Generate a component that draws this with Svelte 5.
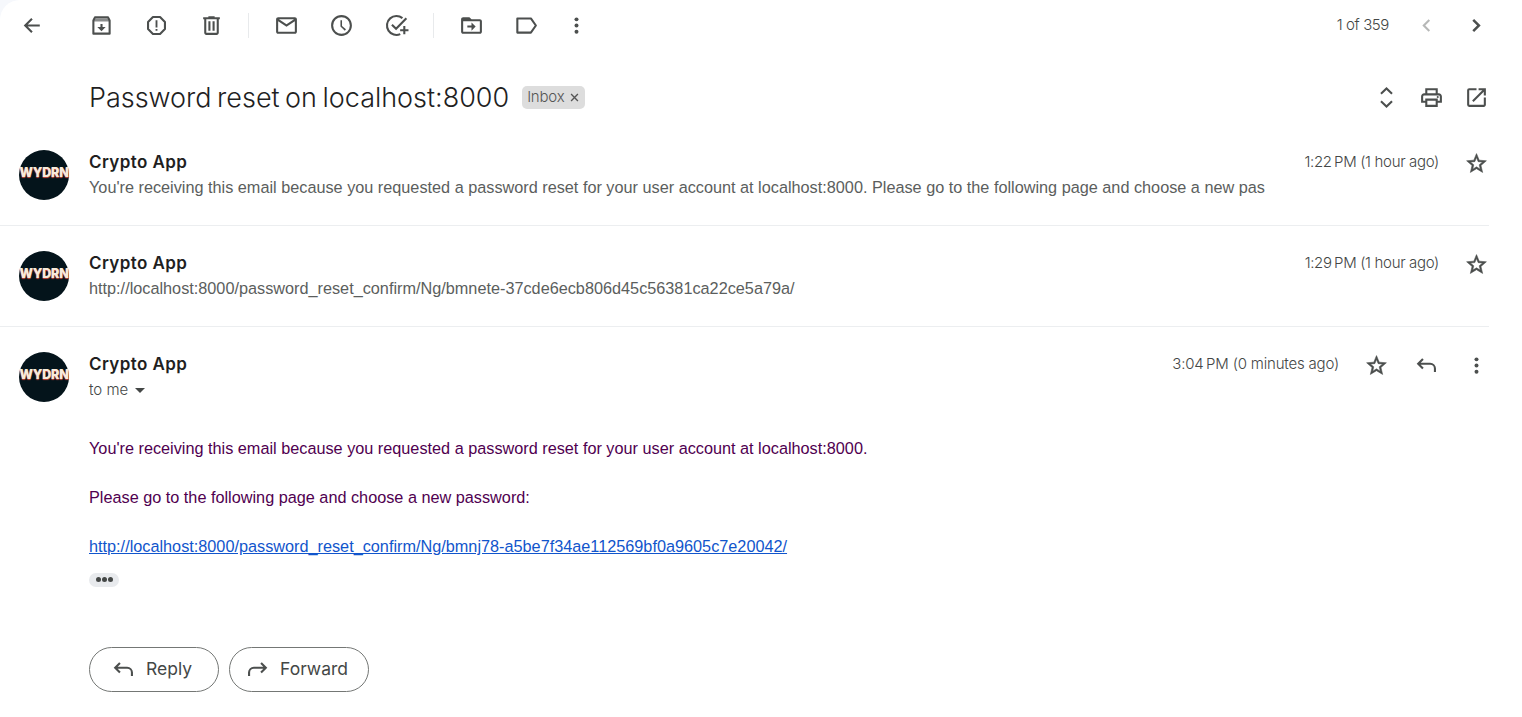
<script>
  const messages = [
    {
      time: '1:22\u202fPM (1 hour ago)',
      text: "You're receiving this email because you requested a password reset for your user account at localhost:8000. Please go to the following page and choose a new pas"
    },
    {
      time: '1:29\u202fPM (1 hour ago)',
      text: 'http://localhost:8000/password_reset_confirm/Ng/bmnete-37cde6ecb806d45c56381ca22ce5a79a/'
    }
  ];
</script>

{#snippet glyph(name)}
  <svg class="icon" viewBox="0 0 24 24" aria-hidden="true">
    {#if name === 'back'}
      <path class="line" stroke-width="1.8" d="M19 12H5.5M11.5 5.5 5 12l6.5 6.5" />
    {:else if name === 'archive'}
      <path class="line" d="M4.2 7.2 5.7 4.2h12.6l1.5 3v12.6H4.2z" stroke-linejoin="round" />
      <path d="M4 5.5h16v2.7H4z" opacity=".65" />
      <path d="M11 10.5h2v3h3l-4 4-4-4h3z" />
    {:else if name === 'spam'}
      <path class="line" stroke-width="1.8" stroke-linejoin="round" d="M8.6 3.9h6.8l4.7 4.7v6.8l-4.7 4.7H8.6l-4.7-4.7V8.6z" />
      <path d="M11.1 7h1.8v6.8h-1.8zM11.1 15.3h1.8v1.8h-1.8z" />
    {:else if name === 'delete'}
      <path d="M15 4V3H9v1H4v2h1v13c0 1.1.9 2 2 2h10c1.1 0 2-.9 2-2V6h1V4zm2 15H7V6h10zM9 8h2v9H9zm4 0h2v9h-2z" />
    {:else if name === 'mail'}
      <path d="M20 4H4c-1.1 0-2 .9-2 2v12c0 1.1.9 2 2 2h16c1.1 0 2-.9 2-2V6c0-1.1-.9-2-2-2zm-.8 2L12 10.8 4.8 6zM4 18V7.9l8 5.3 8-5.3V18z" />
    {:else if name === 'clock'}
      <path d="M11.99 2C6.47 2 2 6.48 2 12s4.47 10 9.99 10C17.52 22 22 17.52 22 12S17.52 2 11.99 2zM12 20a8 8 0 1 1 0-16 8 8 0 0 1 0 16zm.5-13H11v6l4.2 4 1.1-1.3-3.8-3.3z" />
    {:else if name === 'task'}
      <path class="line" stroke-width="1.8" d="M17.7 4.9A9.1 9.1 0 1 0 15.6 20.3M7.6 11.2l4 4L21.5 5" />
      <path class="line" stroke-width="1.9" d="M19.5 12.5v8M15.5 16.5h8" />
    {:else if name === 'move'}
      <path d="M20 6h-8l-2-2H4c-1.1 0-2 .9-2 2v12c0 1.1.9 2 2 2h16c1.1 0 2-.9 2-2V8c0-1.1-.9-2-2-2zm0 12H4V8h16zM12 17l4-4-4-4v3H8v2h4z" />
      <path d="M3 5h7l2 2.5H3z" />
    {:else if name === 'label'}
      <path class="line" stroke-linejoin="round" d="M3.2 5.2h13l4.8 6.8-4.8 6.8h-13z" />
    {:else if name === 'more'}
      <circle cx="12" cy="6.1" r="1.9" /><circle cx="12" cy="12" r="1.9" /><circle cx="12" cy="17.9" r="1.9" />
    {:else if name === 'prev'}
      <path d="M15.4 7.4 14 6l-6 6 6 6 1.4-1.4-4.6-4.6z" />
    {:else if name === 'next'}
      <path d="M9.7 5.7 8 7.4l4.6 4.6L8 16.6l1.7 1.7L16 12z" />
    {:else if name === 'expand'}
      <path class="line" d="m6.7 8.3 5.3-5 5.3 5M6.7 15.7l5.3 5 5.3-5" />
    {:else if name === 'print'}
      <path d="M19 8h-1V3H6v5H5c-1.66 0-3 1.34-3 3v6h4v4h12v-4h4v-6c0-1.66-1.34-3-3-3zM8 5h8v3H8zm8 12v2H8v-4h8zm2-2v-2H6v2H4v-4c0-.55.45-1 1-1h14c.55 0 1 .45 1 1v4z" />
      <circle cx="18" cy="11.5" r="1" />
    {:else if name === 'open'}
      <path d="M19 19H5V5h7V3H5a2 2 0 0 0-2 2v14a2 2 0 0 0 2 2h14c1.1 0 2-.9 2-2v-7h-2zM14 3v2h3.6l-9.8 9.8 1.4 1.4L19 6.4V10h2V3z" />
    {:else if name === 'star'}
      <path stroke="#444746" stroke-width=".5" d="m21.5 9.4-6.9-.6L12 2.5 9.4 8.8l-6.9.6 5.2 4.5L6.1 20.6 12 17l5.9 3.6-1.6-6.7zM12 15.2l-3.6 2.2 1-4.1-3.2-2.7 4.2-.4L12 6.3l1.6 3.9 4.2.4-3.2 2.7 1 4.1z" />
    {:else if name === 'reply'}
      <path class="line" stroke-width="1.8" d="M8.6 5.7 4 10.3l4.6 4.6M4.2 10.3h11.3a4.6 4.6 0 0 1 4.6 4.6v3.4" />
    {:else if name === 'forward'}
      <path class="line" stroke-width="1.8" d="m15.4 5.7 4.6 4.6-4.6 4.6M19.8 10.3H8.5a4.6 4.6 0 0 0-4.6 4.6v3.4" />
    {/if}
  </svg>
{/snippet}

{#snippet avatar()}
  <div class="avatar"><span>WYDRN</span></div>
{/snippet}

<main class="mail">
  <div class="toolbar">
    <button class="tool back" aria-label="Back">{@render glyph('back')}</button>
    <div class="group">
      {#each ['archive', 'spam', 'delete'] as name}
        <button class="tool" aria-label={name}>{@render glyph(name)}</button>
      {/each}
    </div>
    <div class="group">
      {#each ['mail', 'clock', 'task'] as name}
        <button class="tool" aria-label={name}>{@render glyph(name)}</button>
      {/each}
    </div>
    <div class="group">
      {#each ['move', 'label', 'more'] as name}
        <button class="tool {name}" aria-label={name}>{@render glyph(name)}</button>
      {/each}
    </div>
    <div class="pager">
      <span class="count">1 of 359</span>
      <button class="tool dim" aria-label="Newer">{@render glyph('prev')}</button>
      <button class="tool" aria-label="Older">{@render glyph('next')}</button>
    </div>
  </div>

  <header class="subject">
    <h1>Password reset on localhost:8000</h1>
    <div class="chip"><span>Inbox</span>
      <svg viewBox="0 0 10 10"><path d="m1.2 1.2 7.6 7.6m0-7.6L1.2 8.8" /></svg>
    </div>
    <div class="actions">
      {#each ['expand', 'print', 'open'] as name}
        <button class="tool" aria-label={name}>{@render glyph(name)}</button>
      {/each}
    </div>
  </header>

  {#each messages as message}
    <article class="message collapsed">
      {@render avatar()}
      <div class="content">
        <div class="head">
          <strong>Crypto App</strong>
          <span class="time">{message.time}</span>
          <button class="tool star" aria-label="Star">{@render glyph('star')}</button>
        </div>
        <p class="preview">{message.text}</p>
      </div>
    </article>
  {/each}

  <article class="message">
    {@render avatar()}
    <div class="content">
      <div class="head">
        <strong>Crypto App</strong>
        <span class="time latest">{'3:04\u202fPM (0 minutes ago)'}</span>
        <button class="tool star" aria-label="Star">{@render glyph('star')}</button>
        <button class="tool" aria-label="Reply">{@render glyph('reply')}</button>
        <button class="tool" aria-label="More">{@render glyph('more')}</button>
      </div>
      <div class="to"><span>to me</span><i></i></div>
      <div class="body">
        <p>You're receiving this email because you requested a password reset for your user account at localhost:8000.</p>
        <p>Please go to the following page and choose a new password:</p>
        <p><a href="#reset">http://localhost:8000/password_reset_confirm/Ng/bmnj78-a5be7f34ae112569bf0a9605c7e20042/</a></p>
      </div>
      <button class="trimmed" aria-label="Show trimmed content"><i></i><i></i><i></i></button>
      <div class="replies">
        <button class="reply">{@render glyph('reply')}<span>Reply</span></button>
        <button class="forward">{@render glyph('forward')}<span>Forward</span></button>
      </div>
    </div>
  </article>
</main>

<style>
  :global(body) { background: #f6f8fc; }
  .mail {
    box-sizing: border-box;
    height: 717px;
    overflow: hidden;
    background: #fff;
    border-top-left-radius: 20px;
    font-family: Inter, "Open Sans", sans-serif;
    color: #444746;
  }
  button { border: 0; padding: 0; margin: 0; background: none; font: inherit; color: inherit; }
  h1, p { margin: 0; font-weight: 400; }
  .icon { display: block; width: 25px; height: 25px; fill: #4c4f4e; flex: none; }
  .icon .line { fill: none; stroke: #4c4f4e; stroke-width: 2; }
  .tool { display: flex; align-items: center; justify-content: center; width: 55px; height: 50px; flex: none; }

  .toolbar { display: flex; align-items: center; height: 51px; padding-right: 21px; }
  .tool.back { width: 64px; margin-right: 10px; }
  .group { display: flex; align-items: center; }
  .group + .group::before { content: ""; width: 1px; height: 25px; margin: 0 10px 0 9px; background: #e8eaec; }
  .tool.more { width: 45px; }
  .pager { display: flex; align-items: center; margin-left: auto; }
  .pager .tool { width: 50px; }
  .count { margin-right: 12px; padding-bottom: 2px; font-size: 15px; font-weight: 300; white-space: nowrap; letter-spacing: -0.4px; color: #444746; }
  .dim { opacity: .4; }

  .subject { display: flex; align-items: center; height: 50px; margin: 21px 23px 3px 89px; }
  h1 { font-size: 27px; font-weight: 300; letter-spacing: -0.02px; word-spacing: -2px; white-space: nowrap; color: #1f1f1f; }
  .chip { display: flex; align-items: center; box-sizing: border-box; width: 63px; height: 23px; margin-left: 13px; padding: 0 6px 0 5px; border-radius: 5px; background: #ddd; font-size: 15px; font-weight: 300; color: #555; letter-spacing: -.2px; }
  .chip span { padding-bottom: 1px; }
  .chip svg { width: 9px; height: 9px; margin: 1px 0 0 auto; fill: none; stroke: #555; stroke-width: 1.5; }
  .actions { display: flex; margin-left: auto; }
  .actions .tool { width: 45px; }

  .message { display: flex; width: 1489px; box-sizing: border-box; padding: 25px 0 0 19px; }
  .collapsed { height: 101px; border-bottom: 1px solid #eceef0; }
  .avatar { display: flex; justify-content: center; width: 50px; height: 50px; margin-right: 20px; flex: none; border-radius: 50%; background: #04141b; }
  .avatar span { font: 900 12.5px/45px Inter, sans-serif; letter-spacing: -.2px; color: #f7eadb; text-shadow: 0 1px 1px #c9463a; }
  .content { flex: 1; min-width: 0; }
  .head { display: flex; align-items: center; height: 25px; }
  strong { padding-bottom: 2px; font-size: 17px; font-weight: 600; color: #1f1f1f; white-space: nowrap; letter-spacing: .4px; }
  .time { margin-left: auto; margin-right: 12px; padding-bottom: 2px; font-size: 15px; font-weight: 300; white-space: nowrap; letter-spacing: -.33px; }
  .time.latest { letter-spacing: -.19px; }
  .head .tool { box-sizing: border-box; width: 50px; padding-top: 1px; }
  .head .tool:last-child { margin-right: -12px; }
  .preview, .body { font-family: "Liberation Sans", Arial, sans-serif; font-size: 16.25px; white-space: nowrap; }
  .preview { line-height: 25px; color: #5b5e5d; }
  .to { display: flex; align-items: center; height: 25px; font-size: 15px; font-weight: 300; }
  .to span { padding-bottom: 1px; }
  .to i { margin: 1px 0 0 7px; border: 5px solid transparent; border-top-color: #444746; border-bottom: 0; }
  .body { padding-top: 34px; line-height: 24.5px; color: #500050; }
  .body p + p { margin-top: 24.5px; }
  .body a { color: #15c; text-decoration: underline; }
  .trimmed { display: flex; align-items: center; justify-content: center; gap: 1px; width: 30px; height: 14px; margin-top: 14px; border-radius: 7px; background: #e8eaed; }
  .trimmed i { width: 5px; height: 5px; border-radius: 50%; background: #444746; }
  .replies { display: flex; gap: 10px; margin-top: 60px; }
  .replies button { display: flex; align-items: center; box-sizing: border-box; height: 45px; border: 1px solid #747775; border-radius: 23px; font-size: 17.5px; white-space: nowrap; }
  .replies span { padding-bottom: 1px; }
  .reply { width: 130px; padding-left: 21px; gap: 10px; }
  .forward { width: 140px; padding-left: 15px; gap: 10px; }
</style>
